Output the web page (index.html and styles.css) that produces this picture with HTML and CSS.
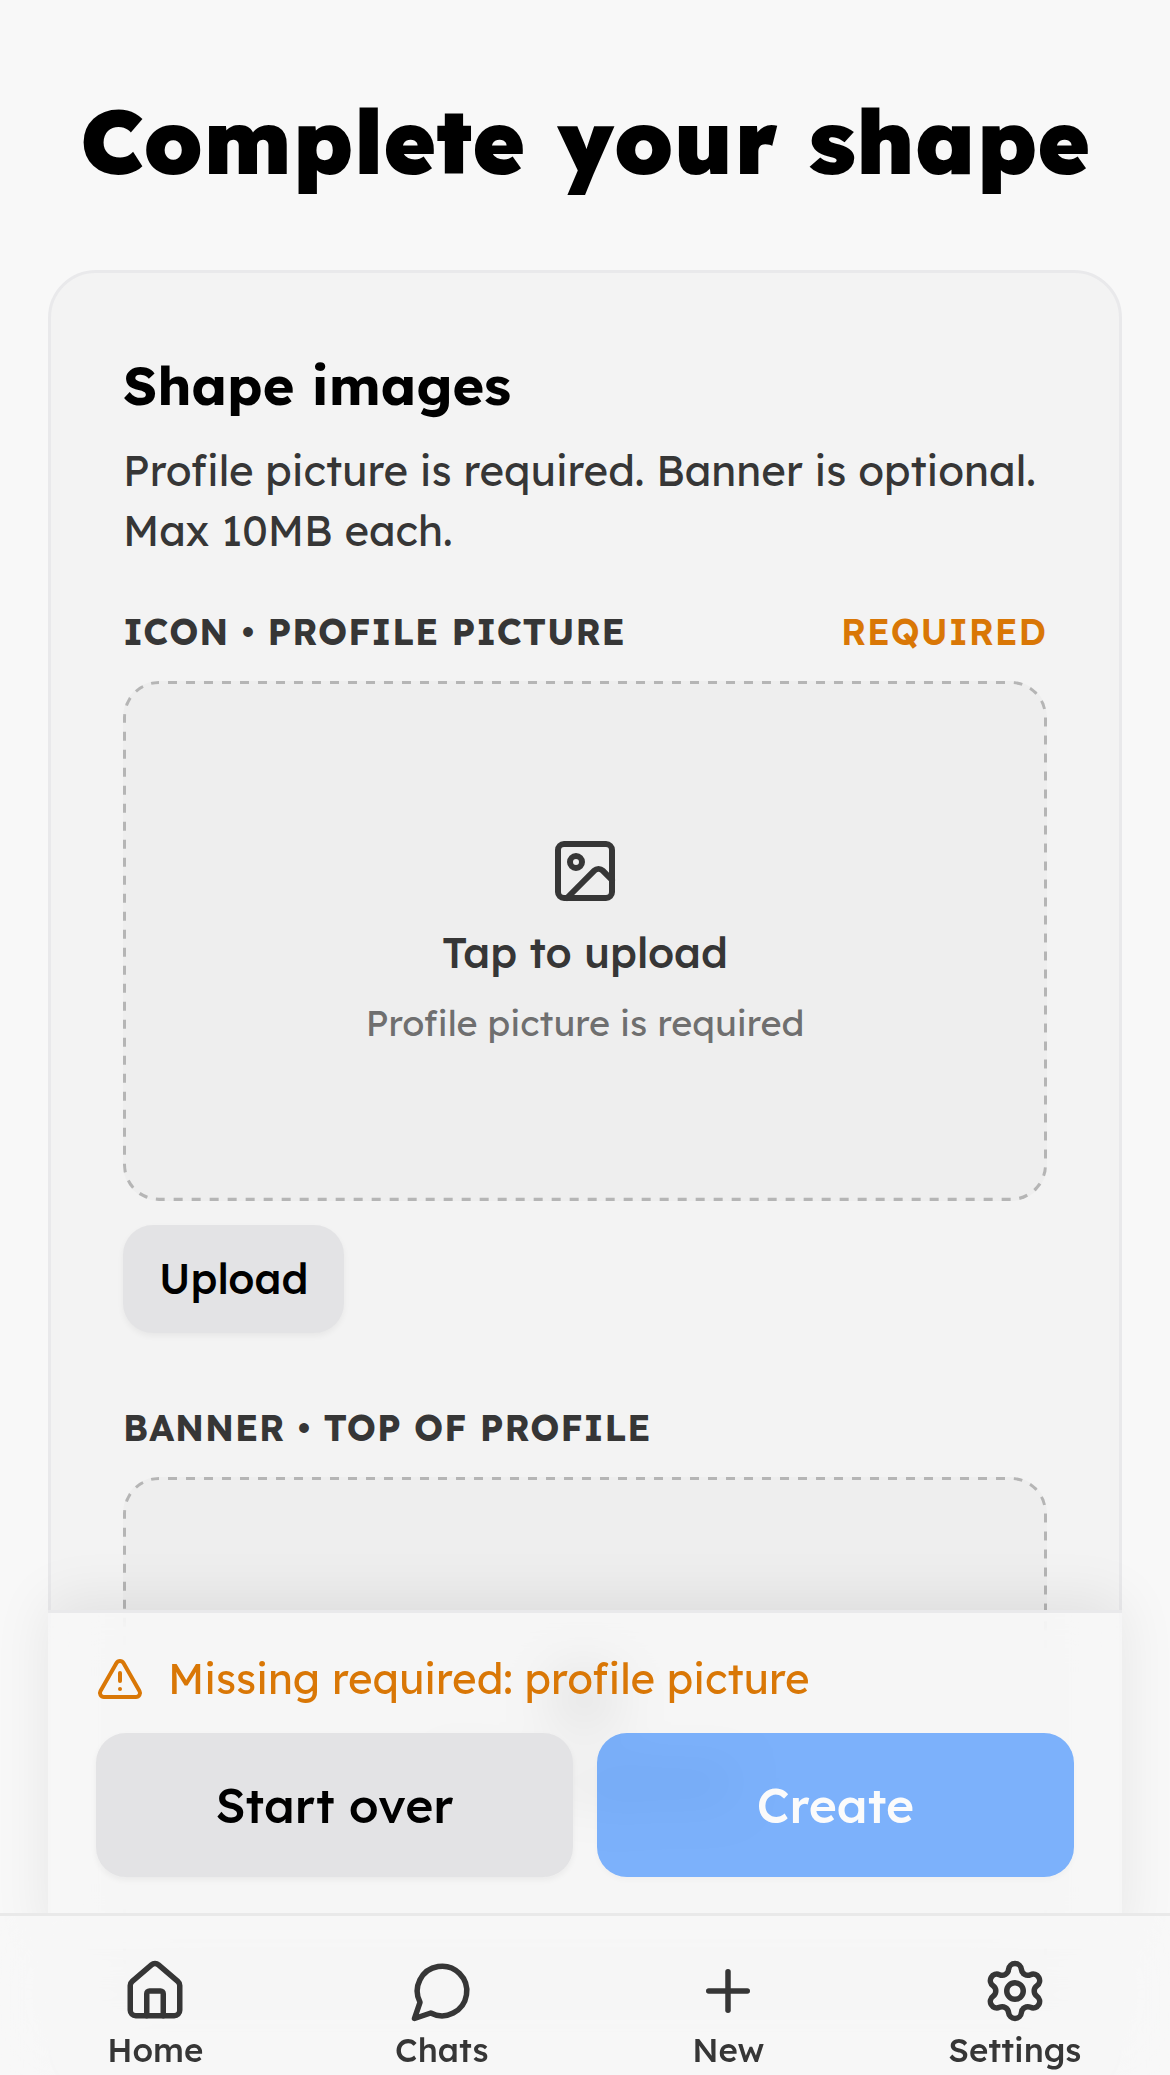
FILE: index.html
```html
<!DOCTYPE html>
<html lang="en">
<head>
    <meta charset="UTF-8">
    <meta name="viewport" content="width=device-width, initial-scale=1.0">
    <title>Complete your shape</title>
    <link rel="stylesheet" href="styles.css">
</head>
<body>
    <main class="page">
        <h1 class="page-title">Complete your shape</h1>

        <section class="card">
            <h2 class="card-title">Shape images</h2>
            <p class="card-text">Profile picture is required. Banner is optional. Max 10MB each.</p>

            <div class="field">
                <div class="field-head">
                    <h3 class="field-label">Icon • Profile picture</h3>
                    <span class="field-required">Required</span>
                </div>
                <button type="button" class="dropzone">
                    <svg class="dropzone-outline" aria-hidden="true">
                        <rect width="100%" height="100%" rx="36" />
                    </svg>
                    <svg class="dropzone-icon" viewBox="0 0 24 24" aria-hidden="true">
                        <rect x="3" y="3" width="18" height="18" rx="2" />
                        <circle cx="9" cy="9" r="2" />
                        <path d="m21 15-3.086-3.086a2 2 0 0 0-2.828 0L6 21" />
                    </svg>
                    <span class="dropzone-title">Tap to upload</span>
                    <span class="dropzone-hint">Profile picture is required</span>
                </button>
                <button type="button" class="button button-small">Upload</button>
            </div>

            <div class="field">
                <div class="field-head">
                    <h3 class="field-label">Banner • Top of profile</h3>
                </div>
                <button type="button" class="dropzone">
                    <svg class="dropzone-outline" aria-hidden="true">
                        <rect width="100%" height="100%" rx="36" />
                    </svg>
                    <svg class="dropzone-icon" viewBox="0 0 24 24" aria-hidden="true">
                        <rect x="3" y="3" width="18" height="18" rx="2" />
                        <circle cx="9" cy="9" r="2" />
                        <path d="m21 15-3.086-3.086a2 2 0 0 0-2.828 0L6 21" />
                    </svg>
                    <span class="dropzone-title">Tap to upload</span>
                </button>
            </div>
        </section>
    </main>

    <!-- stays at the bottom, over the page -->
    <footer class="dock">
        <div class="action-bar">
            <p class="warning">
                <svg class="warning-icon" viewBox="0 0 24 24" aria-hidden="true">
                    <path d="m21.73 18-8-14a2 2 0 0 0-3.48 0l-8 14A2 2 0 0 0 4 21h16a2 2 0 0 0 1.73-3" />
                    <path d="M12 9v4" />
                    <path d="M12 17h.01" />
                </svg>
                Missing required: profile picture
            </p>
            <div class="actions">
                <button type="button" class="button">Start over</button>
                <button type="button" class="button button-primary" disabled>Create</button>
            </div>
        </div>

        <nav class="tabs">
            <a href="#home" class="tab">
                <svg class="tab-icon" viewBox="0 0 24 24" aria-hidden="true">
                    <path d="M15 21v-8a1 1 0 0 0-1-1h-4a1 1 0 0 0-1 1v8" />
                    <path d="M3 10a2 2 0 0 1 .709-1.528l7-5.999a2 2 0 0 1 2.582 0l7 5.999A2 2 0 0 1 21 10v9a2 2 0 0 1-2 2H5a2 2 0 0 1-2-2z" />
                </svg>
                <span>Home</span>
            </a>
            <a href="#chats" class="tab">
                <svg class="tab-icon" viewBox="0 0 24 24" aria-hidden="true">
                    <path d="M7.9 20A9 9 0 1 0 4 16.1L2 22Z" />
                </svg>
                <span>Chats</span>
            </a>
            <a href="#new" class="tab">
                <svg class="tab-icon" viewBox="0 0 24 24" aria-hidden="true">
                    <path d="M5 12h14" />
                    <path d="M12 5v14" />
                </svg>
                <span>New</span>
            </a>
            <a href="#settings" class="tab">
                <svg class="tab-icon" viewBox="0 0 24 24" aria-hidden="true">
                    <path d="M9.671 4.136a2.34 2.34 0 0 1 4.659 0 2.34 2.34 0 0 0 3.319 1.915 2.34 2.34 0 0 1 2.33 4.033 2.34 2.34 0 0 0 0 3.831 2.34 2.34 0 0 1-2.33 4.033 2.34 2.34 0 0 0-3.319 1.915 2.34 2.34 0 0 1-4.659 0 2.34 2.34 0 0 0-3.32-1.915 2.34 2.34 0 0 1-2.33-4.033 2.34 2.34 0 0 0 0-3.831A2.34 2.34 0 0 1 6.35 6.051a2.34 2.34 0 0 0 3.319-1.915" />
                    <circle cx="12" cy="12" r="3" />
                </svg>
                <span>Settings</span>
            </a>
        </nav>
    </footer>
</body>
</html>
```
FILE: styles.css
```css
* {
  box-sizing: border-box;
}

body {
  margin: 0;
  background: #f8f8f8;
  color: #363636;
  font-family: Lexend, Inter, "Open Sans", sans-serif;
  font-size: 42px;
  line-height: 60px;
}

h1,
h2,
h3,
p {
  margin: 0;
}

svg {
  flex: none;
  fill: none;
  stroke: currentColor;
  stroke-width: 2;
  stroke-linecap: round;
  stroke-linejoin: round;
}

/* the page scrolls under the dock */
.page {
  height: 100vh;
  padding: 87px 48px 480px;
  overflow-y: auto;
  scrollbar-width: none;
}

.page-title {
  margin-bottom: 75px;
  color: #000;
  font-size: 90px;
  font-weight: 900;
  line-height: 108px;
  text-align: center;
}

.card {
  padding: 72px;
  border: 3px solid #e9e9eb;
  border-radius: 48px;
  background: #f3f3f3;
}

.card-title {
  margin-bottom: 16px;
  color: #000;
  font-size: 54px;
  font-weight: 700;
  line-height: 80px;
}

.card-text {
  margin-bottom: 48px;
}

.field + .field {
  margin-top: 72px;
}

.field-head {
  display: flex;
  justify-content: space-between;
  margin-bottom: 26px;
  font-size: 36px;
  line-height: 46px;
  letter-spacing: 0.025em;
  text-transform: uppercase;
}

.field-label {
  font-size: 36px;
  font-weight: 700;
}

.field-required {
  color: #d97706;
  font-weight: 600;
}

.dropzone {
  position: relative;
  display: flex;
  flex-direction: column;
  align-items: center;
  justify-content: center;
  gap: 16px;
  width: 100%;
  aspect-ratio: 16 / 9;
  margin-bottom: 24px;
  padding: 0;
  overflow: hidden;
  border: 0;
  border-radius: 36px;
  background: #eee;
  color: #363636;
  font: inherit;
  cursor: pointer;
}

/* the outer half of the stroke is cut off by the dropzone */
.dropzone-outline {
  position: absolute;
  inset: 0;
  width: 100%;
  height: 100%;
  stroke: #b5b5b5;
  stroke-width: 6;
  stroke-linecap: butt;
  stroke-dasharray: 9;
  stroke-dashoffset: 9;
}

.dropzone-icon {
  width: 72px;
  height: 72px;
}

.dropzone-title {
  font-weight: 500;
}

.dropzone-hint {
  color: #6f6f6f;
  font-size: 36px;
  line-height: 48px;
}

.button {
  height: 144px;
  padding: 0 36px;
  border: 0;
  border-radius: 30px;
  background: #e3e3e5;
  box-shadow: 0 3px 6px rgba(0, 0, 0, 0.05);
  color: #000;
  font-family: inherit;
  font-size: 48px;
  font-weight: 500;
  cursor: pointer;
}

.button-small {
  height: 108px;
  font-size: 42px;
}

.button-primary {
  background: #026cff;
  color: #fff;
}

.button:disabled {
  opacity: 0.5;
  cursor: default;
}

.dock {
  position: fixed;
  right: 0;
  bottom: 0;
  left: 0;
}

/* runs on a little behind the tabs */
.action-bar {
  margin: 0 48px -36px;
  padding: 36px 48px 72px;
  border-top: 3px solid #e9e9eb;
  background: rgba(247, 247, 247, 0.8);
  box-shadow: 0 -9px 54px rgba(0, 0, 0, 0.08);
  backdrop-filter: blur(24px);
}

.warning {
  display: flex;
  align-items: center;
  gap: 24px;
  margin-bottom: 24px;
  color: #d97706;
}

.warning-icon {
  width: 48px;
  height: 48px;
}

.actions {
  display: grid;
  grid-template-columns: 1fr 1fr;
  gap: 24px;
}

.tabs {
  position: relative;
  display: grid;
  grid-template-columns: repeat(4, 1fr);
  padding: 42px 12px 7px;
  border-top: 3px solid #e9e9e9;
  background: rgba(248, 248, 248, 0.8);
  backdrop-filter: blur(36px);
}

.tab {
  display: flex;
  flex-direction: column;
  align-items: center;
  gap: 8px;
  color: #363636;
  font-size: 33px;
  font-weight: 500;
  line-height: 36px;
  text-decoration: none;
}

.tab-icon {
  width: 66px;
  height: 66px;
}
```
